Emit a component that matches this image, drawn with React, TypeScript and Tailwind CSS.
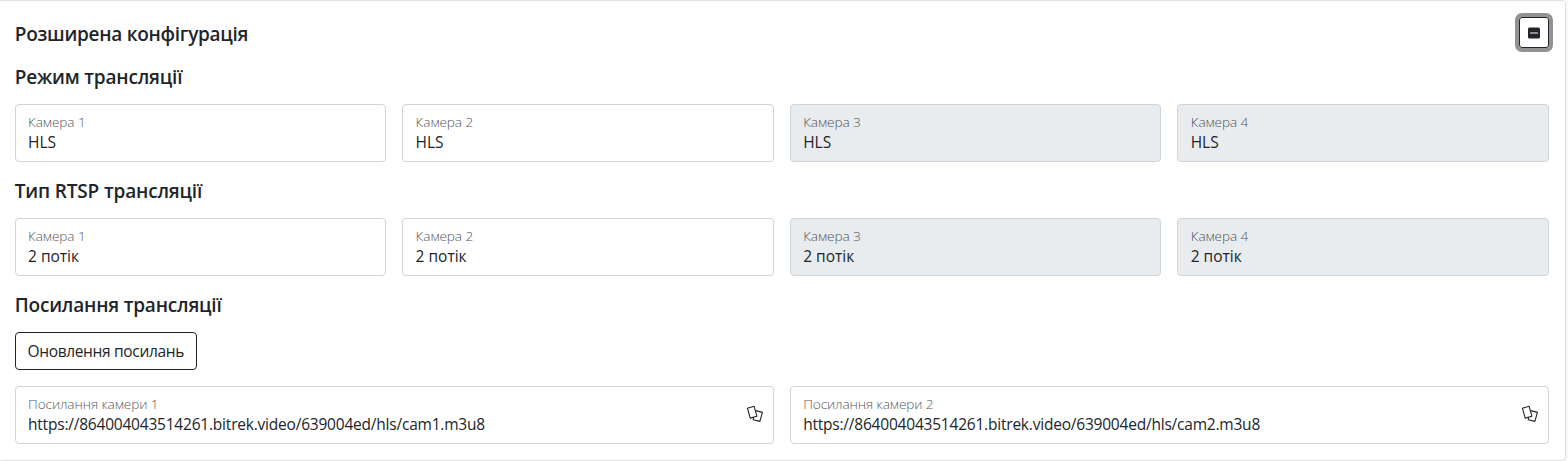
import React from 'react';

const cameras = [
  { id: 1, disabled: false },
  { id: 2, disabled: false },
  { id: 3, disabled: true },
  { id: 4, disabled: true },
];

const links = [
  { id: 1, url: 'https://864004043514261.bitrek.video/639004ed/hls/cam1.m3u8' },
  { id: 2, url: 'https://864004043514261.bitrek.video/639004ed/hls/cam2.m3u8' },
];

function CopyIcon() {
  return (
    <svg width="18" height="18" viewBox="0 0 18 18" fill="none" stroke="currentColor" strokeWidth="1.1" strokeLinejoin="round">
      <path d="M1.4 3.2 8.1 1.3 10.9 11.2 4.2 13.1z" />
      <path d="M9.8 5.6 16.4 7.4 13.9 16.4 7.2 14.8 7.6 12.6" />
    </svg>
  );
}

function Title({ children, className = '' }: { children: React.ReactNode; className?: string }) {
  return <h5 className={`h-6 pt-px text-[19px] leading-6 font-semibold ${className}`}>{children}</h5>;
}

type FieldProps = { label: string; value: string; valueClass?: string; disabled?: boolean; copy?: boolean };

function Field({ label, value, valueClass = '', disabled = false, copy = false }: FieldProps) {
  return (
    <div
      className={`flex h-[58px] items-center justify-between rounded border border-[#ced4da] px-3 ${
        disabled ? 'bg-[#e9ecef]' : 'bg-white'
      }`}
    >
      <div className="pb-[3px] pl-[0.25px]">
        <div className="text-[13.6px] leading-5 font-light tracking-[-0.08px] text-[#212529]/80">{label}</div>
        <div className={`text-[15.5px] leading-5 ${valueClass}`}>{value}</div>
      </div>
      {copy && (
        <button className="-mr-[3px] pb-0.5">
          <CopyIcon />
        </button>
      )}
    </div>
  );
}

function CameraRow({ value }: { value: string }) {
  return (
    <div className="mb-4 grid grid-cols-4 gap-4">
      {cameras.map((camera) => (
        <Field key={camera.id} label={`Камера ${camera.id}`} value={value} disabled={camera.disabled} />
      ))}
    </div>
  );
}

export default function App() {
  return (
    <div className="overflow-hidden bg-[#f8f9fa] pr-0.5 font-['Open_Sans',sans-serif] text-[#212529]">
      <div className="-ml-[2.25px] h-[461px] rounded border border-[#dfdfdf] bg-white p-4">
        <div className="mb-4 flex h-[31px] items-center justify-between">
          <Title className="tracking-[-0.28px]">Розширена конфігурація</Title>
          <button className="flex h-[31px] w-[30px] items-center justify-center rounded-[3px] border border-[#212529] ring-4 ring-[#909294]">
            <svg width="12" height="12" viewBox="0 0 12 12">
              <rect y="0.5" width="12" height="11" rx="1.6" fill="#212529" />
              <path d="M2.5 6h7" stroke="#fff" strokeWidth="1.2" strokeLinecap="round" />
            </svg>
          </button>
        </div>
        <Title className="mb-4 tracking-[-0.19px]">Режим трансляції</Title>
        <CameraRow value="HLS" />
        <Title className="mb-4 tracking-[-0.16px]">Тип RTSP трансляції</Title>
        <CameraRow value="2 потік" />
        <Title className="mb-4 tracking-[-0.2px]">Посилання трансляції</Title>
        <button className="mb-4 block h-[38px] w-[182px] rounded border border-[#212529] pt-0.5 text-[15.5px] tracking-[-0.33px]">
          Оновлення посилань
        </button>
        <div className="grid grid-cols-2 gap-4">
          {links.map((link) => (
            <Field
              key={link.id}
              label={`Посилання камери ${link.id}`}
              value={link.url}
              valueClass="tracking-[-0.21px]"
              copy
            />
          ))}
        </div>
      </div>
    </div>
  );
}
